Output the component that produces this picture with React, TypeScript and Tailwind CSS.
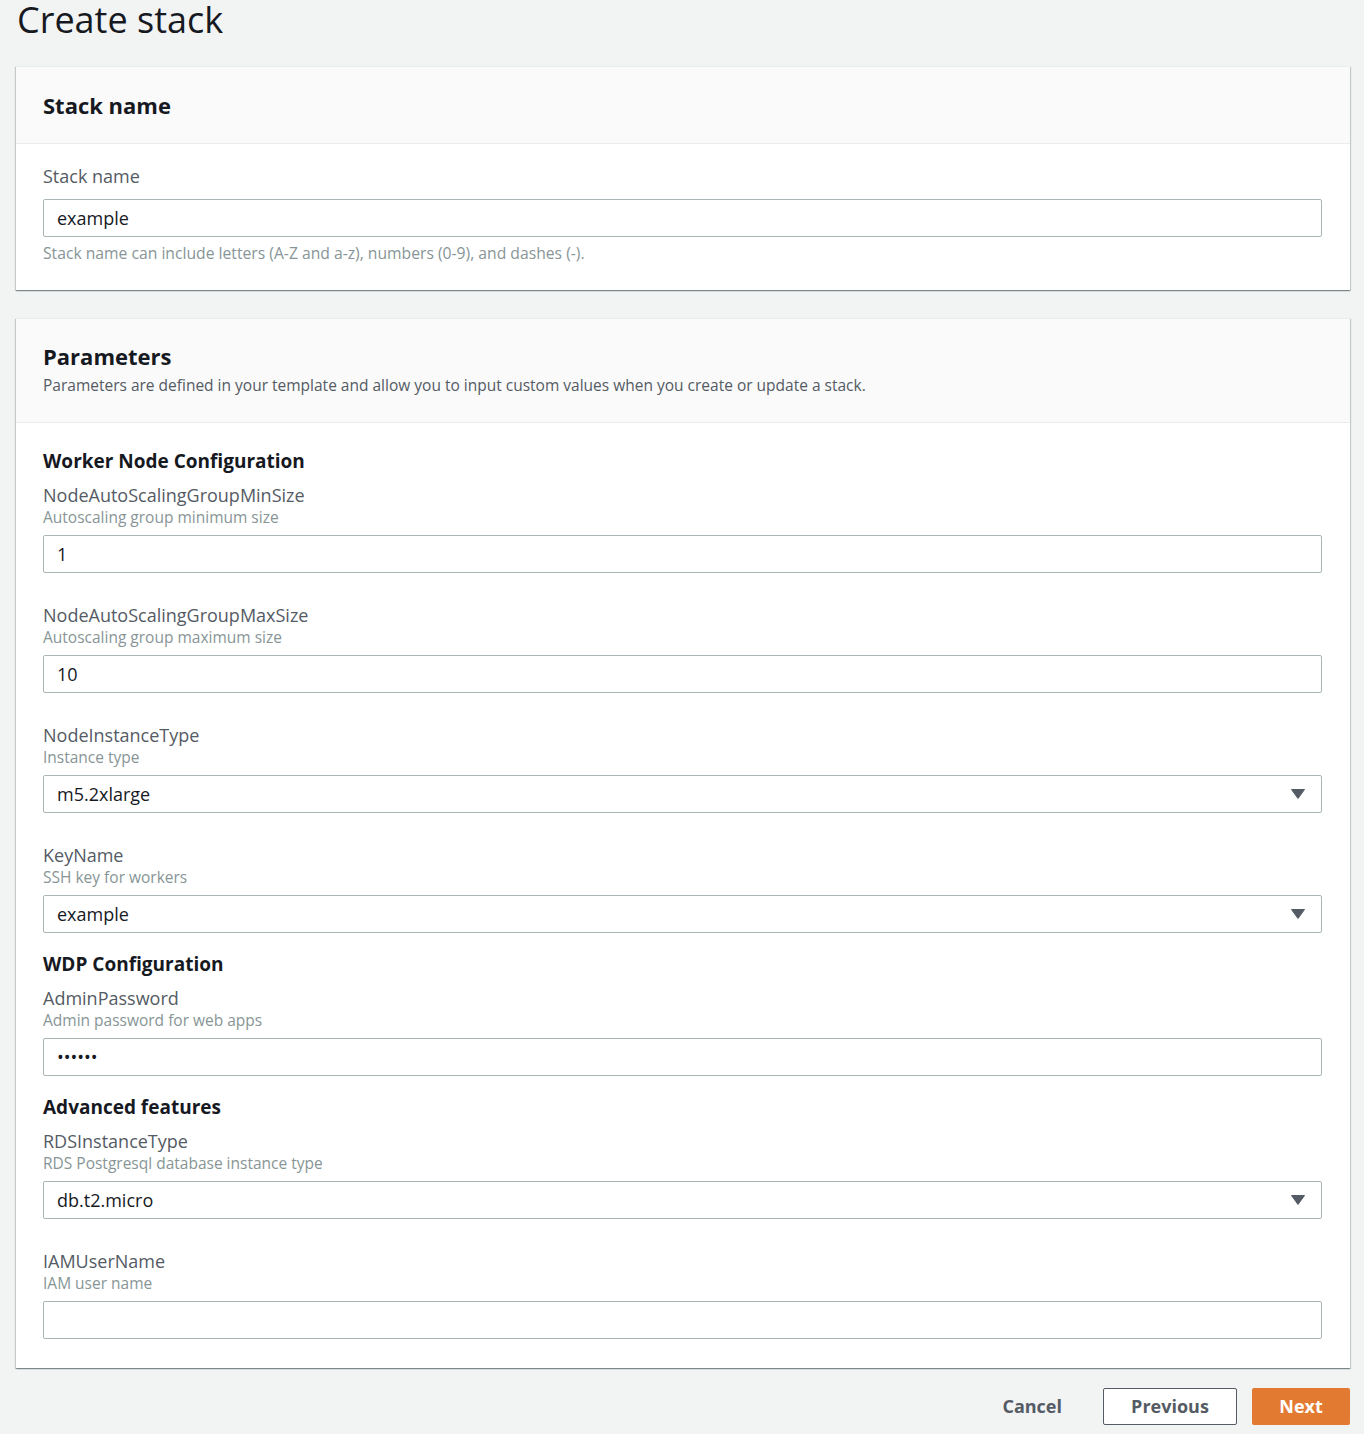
import { ReactNode } from "react";

const font = { fontFamily: '"Open Sans", "Noto Sans", sans-serif' };

function Arrow() {
  return (
    <svg width="14" height="10" viewBox="0 0 14 10" className="shrink-0">
      <path d="M0.5 0.5 H13.5 L7 9.5 Z" fill="#545b64" stroke="#545b64" strokeLinejoin="round" />
    </svg>
  );
}

function TextBox({ value }: { value: string }) {
  return (
    <div className="h-[38px] w-full rounded-[2px] border border-[#aab7b8] bg-white px-[13px] flex items-center text-[18px] text-[#16191f]">
      {value}
    </div>
  );
}

function SelectBox({ value }: { value: string }) {
  return (
    <div className="h-[38px] w-full rounded-[2px] border border-[#aab7b8] bg-white pl-[13px] pr-[16px] flex items-center justify-between text-[18px] text-[#16191f]">
      <span>{value}</span>
      <Arrow />
    </div>
  );
}

function Field({
  label,
  desc,
  children,
}: {
  label: string;
  desc: string;
  children: ReactNode;
}) {
  return (
    <div>
      <div className="text-[18px] leading-[22px] text-[#545b64]">{label}</div>
      <div className="mt-[1px] text-[15.5px] leading-[21px] text-[#879596]">{desc}</div>
      <div className="mt-[7px]">{children}</div>
    </div>
  );
}

function Section({ title, children }: { title: string; children: ReactNode }) {
  return (
    <div>
      <h3 className="text-[19px] leading-[24px] font-bold text-[#16191f]">{title}</h3>
      <div className="mt-[11px] flex flex-col gap-[31px]">{children}</div>
    </div>
  );
}

const card =
  "bg-white border-t border-[#eaeded] shadow-[0_1px_1px_0_rgba(0,28,36,0.3),1px_1px_1px_0_rgba(0,28,36,0.15),-1px_1px_1px_0_rgba(0,28,36,0.15)]";

export default function App() {
  return (
    <div style={font} className="min-h-[1434px] bg-[#f2f3f3] pl-4 pr-[14px] pb-[9px]">
      <h1 className="pl-[1px] text-[36px] leading-[40px] text-[#16191f]">Create stack</h1>

      {/* stack name */}
      <div className={`${card} mt-[26px]`}>
        <div className="bg-[#fafafa] border-b border-[#eaeded] pl-[27px] pr-[28px] pt-[24px] pb-[24px]">
          <h2 className="text-[22px] leading-[28px] font-bold text-[#16191f]">Stack name</h2>
        </div>
        <div className="pl-[27px] pr-[28px] pt-[21px] pb-[26px]">
          <div className="text-[18px] leading-[22px] text-[#545b64]">Stack name</div>
          <div className="mt-[12px]">
            <TextBox value="example" />
          </div>
          <div className="mt-[6px] text-[15.7px] leading-[21px] text-[#879596]">
            Stack name can include letters (A-Z and a-z), numbers (0-9), and dashes (-).
          </div>
        </div>
      </div>

      {/* parameters */}
      <div className={`${card} mt-[28px]`}>
        <div className="bg-[#fafafa] border-b border-[#eaeded] pl-[27px] pr-[28px] pt-[23px] pb-[26px]">
          <h2 className="text-[22px] leading-[28px] font-bold text-[#16191f]">Parameters</h2>
          <p className="mt-[5px] text-[15.5px] leading-[21px] text-[#545b64]">
            Parameters are defined in your template and allow you to input custom values when you
            create or update a stack.
          </p>
        </div>
        <div className="pl-[27px] pr-[28px] pt-[26px] pb-[29px] flex flex-col gap-[19px]">
          <Section title="Worker Node Configuration">
            <Field label="NodeAutoScalingGroupMinSize" desc="Autoscaling group minimum size">
              <TextBox value="1" />
            </Field>
            <Field label="NodeAutoScalingGroupMaxSize" desc="Autoscaling group maximum size">
              <TextBox value="10" />
            </Field>
            <Field label="NodeInstanceType" desc="Instance type">
              <SelectBox value="m5.2xlarge" />
            </Field>
            <Field label="KeyName" desc="SSH key for workers">
              <SelectBox value="example" />
            </Field>
          </Section>
          <Section title="WDP Configuration">
            <Field label="AdminPassword" desc="Admin password for web apps">
              <TextBox value="••••••" />
            </Field>
          </Section>
          <Section title="Advanced features">
            <Field label="RDSInstanceType" desc="RDS Postgresql database instance type">
              <SelectBox value="db.t2.micro" />
            </Field>
            <Field label="IAMUserName" desc="IAM user name">
              <TextBox value="" />
            </Field>
          </Section>
        </div>
      </div>

      {/* actions */}
      <div className="mt-[20px] flex justify-end items-center gap-[15px]">
        <button className="mr-[6px] h-[37px] px-[20px] text-[18px] font-bold text-[#545b64]">Cancel</button>
        <button className="h-[37px] w-[134px] rounded-[2px] border border-[#545b64] bg-white text-[18px] font-bold text-[#545b64]">
          Previous
        </button>
        <button className="h-[37px] w-[98px] rounded-[2px] bg-[#e37a32] text-[18px] font-bold text-white">
          Next
        </button>
      </div>
    </div>
  );
}
